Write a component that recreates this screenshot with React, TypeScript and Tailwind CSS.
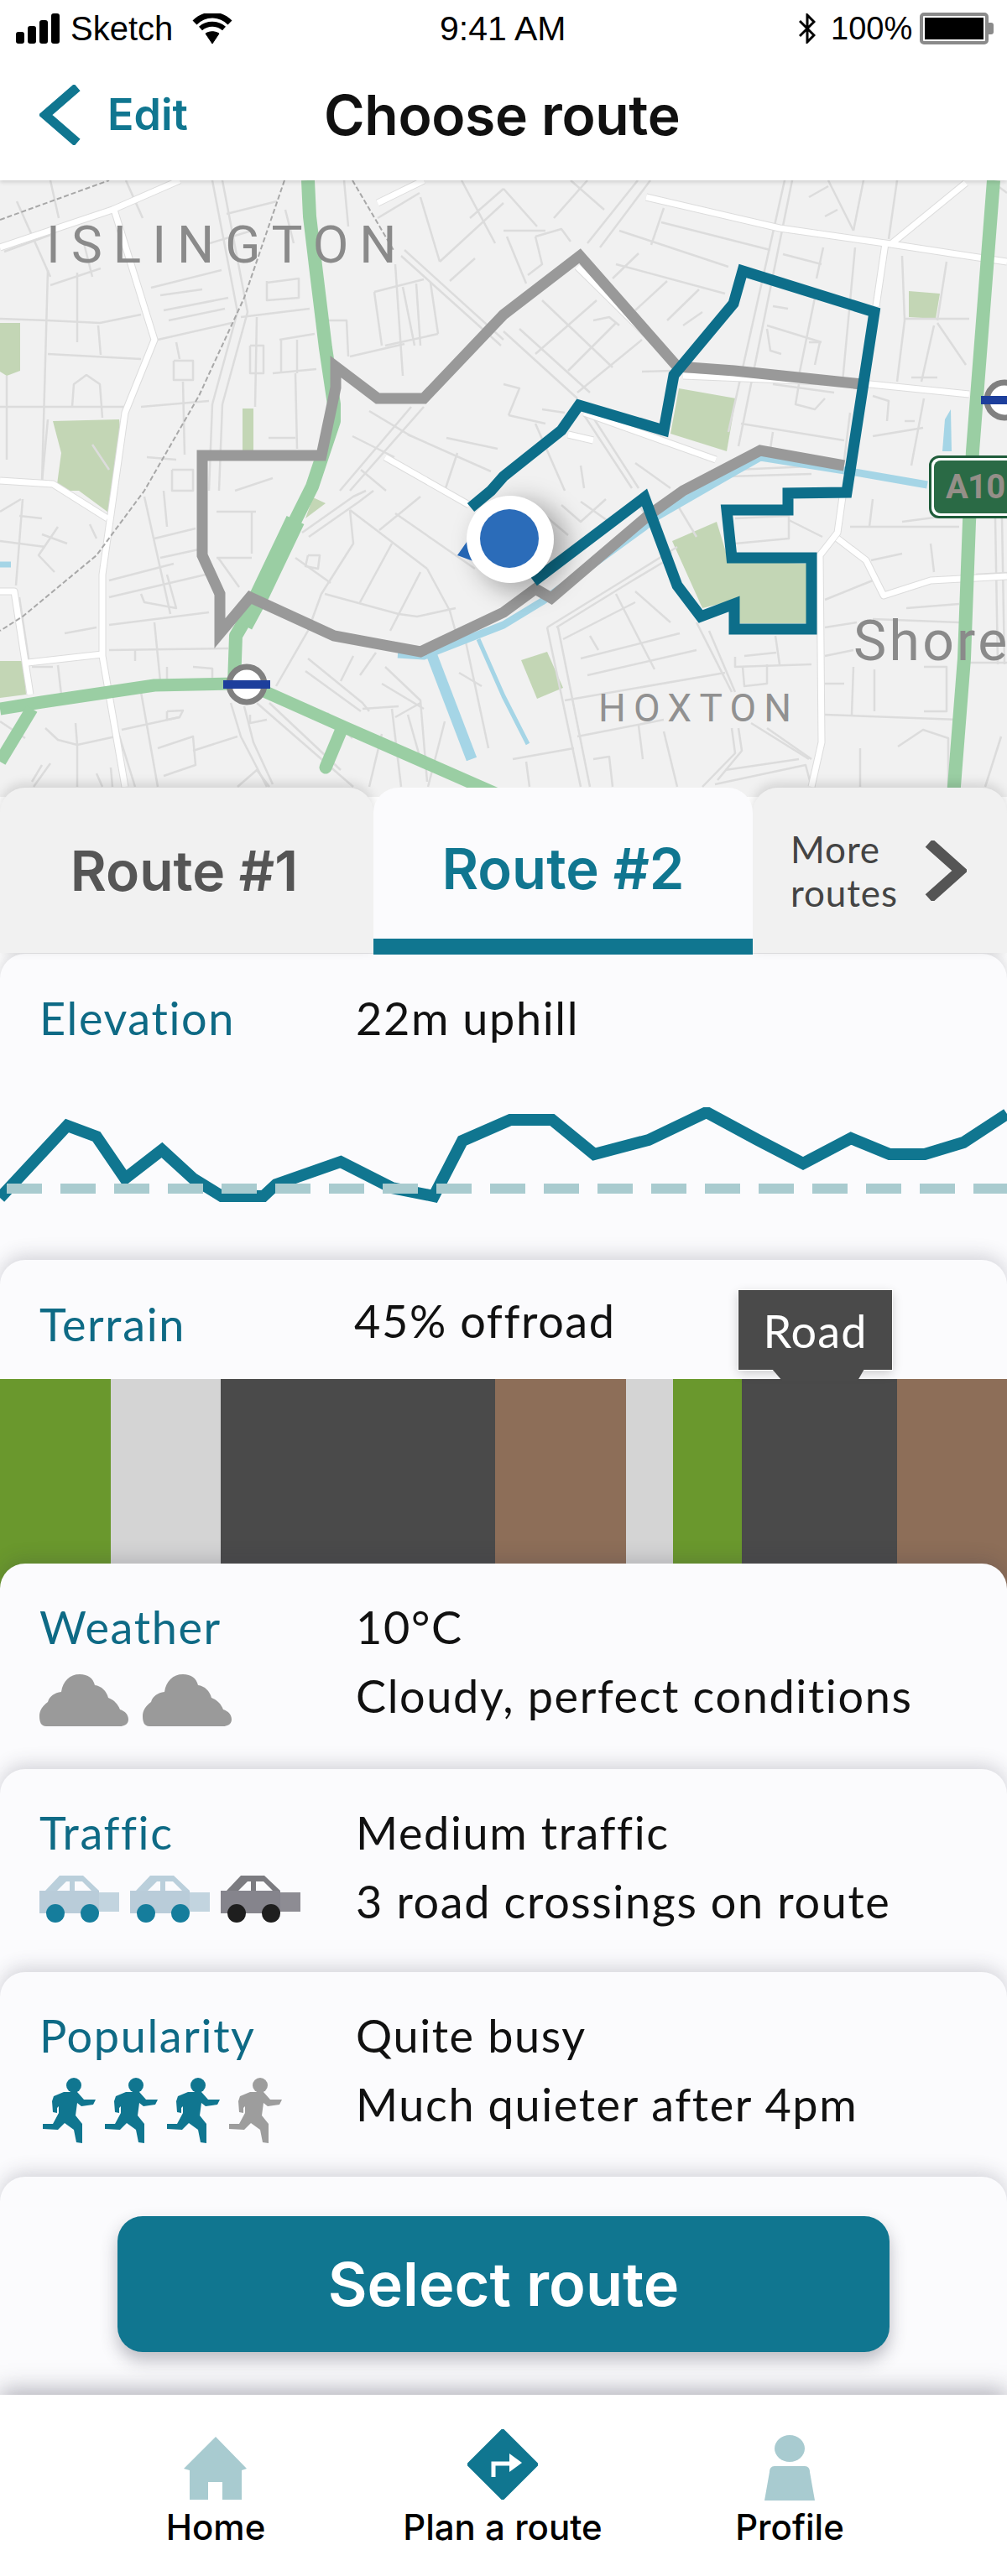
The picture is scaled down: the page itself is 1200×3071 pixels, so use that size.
const streets: string[] = [
  // top left
  '0,380 57,382 119,385 168,375', '57,322 50,575', '92,325 92,408', '117,388 120,423', '57,422 168,428',
  '0,485 149,485', '86,485 88,458 103,447 119,458 122,498', '8,448 8,548', '180,343 264,322', '195,370 272,355',
  '201,382 268,368', '191,352 241,345', '188,405 276,385', '210,408 214,428', '207,430 230,430 230,453 207,453 207,430',
  '218,455 220,542', '168,485 249,478', '298,412 314,412 314,445 298,445 298,412', '306,378 304,485', '287,378 369,368',
  '318,335 318,358 356,355 356,332 318,337', '333,405 375,398', '335,405 335,445', '354,405 354,445', '325,445 377,440',
  '352,445 354,535', '320,522 352,522', '390,382 413,382 415,425', '417,425 482,410', '446,348 505,333', '446,348 455,412',
  '480,342 494,412', '496,338 501,412', '513,337 522,398', '522,398 459,412', '471,315 480,448', '501,235 524,312',
  '524,312 600,242', '482,298 600,405', '478,305 597,412', '536,335 566,308', '505,485 417,585', '490,485 405,585',
  '486,518 585,562', '532,522 593,535', '60,215 70,260', '20,240 60,330', '150,215 170,260', '5,300 60,280', '270,255 330,240',
  '410,215 415,270', '450,260 500,230', '340,250 350,290', '250,290 300,275', '100,290 110,330', '60,340 120,320',
  '253,215 283,372 253,482 249,585', '265,215 295,372 265,482 261,585', '550,215 590,290', '560,260 600,225',
  '420,520 470,545', '440,490 490,520', '430,560 460,585', '545,540 530,585', '175,545 210,548', '205,560 230,560 230,585 205,585 205,560',
  '280,585 325,570', '110,530 130,560', '57,500 50,575',
  // top right
  '600,275 650,275', '638,282 669,273 680,288', '638,282 646,315 629,328', '604,282 627,338', '646,358 730,438',
  '600,395 688,475', '619,392 703,468', '638,422 711,358', '688,468 765,405', '677,442 734,385', '707,382 726,378 738,388',
  '765,443 803,442', '738,275 868,318', '788,265 918,298', '791,248 776,292', '730,332 761,302', '734,315 864,350',
  '757,370 795,335', '795,382 833,345', '814,388 837,372', '935,215 868,515', '944,215 880,532', '981,295 973,332',
  '933,303 979,315', '1029,215 1017,275', '1069,215 1059,285', '987,215 1017,275', '964,235 987,222', '983,258 998,250',
  '1019,295 1004,455', '971,355 952,448', '921,365 939,368', '914,388 979,408', '964,408 977,408 971,435',
  '914,392 918,418 931,422', '1078,382 1069,455', '1128,312 1117,382', '1075,305 1078,382', '1078,380 1155,380',
  '1117,385 1151,435', '1113,388 1098,455', '1086,450 1117,450', '1101,475 1086,555', '1040,472 1059,478 1057,502',
  '1078,502 1090,502', '883,505 1006,525', '921,515 918,535', '952,458 948,482 971,488 983,475', '921,458 994,468',
  '1013,492 1006,548', '600,458 619,463 606,495', '606,495 650,505', '646,488 673,492', '638,505 673,585', '696,495 753,582',
  '707,498 761,582', '692,555 696,582', '757,552 799,582', '868,568 967,565', '876,560 965,556', '1040,520 1100,510',
  '600,225 640,270', '680,215 720,250', '700,215 660,260', '760,215 700,290', '775,215 715,295', '1180,215 1200,230',
  // bottom left
  '27,595 19,698', '23,615 50,618', '0,645 54,652', '69,628 46,662 65,682', '50,637 80,648', '107,625 115,642',
  '34,785 23,712', '130,692 207,672', '130,712 245,685', '130,745 249,730', '130,775 272,773', '191,665 237,655',
  '184,642 233,630', '172,592 203,732', '195,585 199,628', '184,742 191,812', '77,755 115,748', '168,708 172,718 210,725 199,685',
  '38,795 63,795', '69,793 73,828', '161,775 161,788', '199,795 199,812', '230,795 253,797 253,812', '130,838 161,938',
  '168,825 188,938', '145,870 214,855', '199,848 218,847 214,855 199,858 199,848', '188,892 230,878 233,912 195,925',
  '230,895 283,878', '54,868 69,882 92,888 90,862', '92,888 138,878', '92,888 92,938', '38,932 50,912', '115,922 122,938',
  '132,915 134,938', '275,838 287,878 318,938', '291,842 302,885 325,935', '306,838 421,938', '321,838 406,918',
  '283,938 306,918 321,938', '298,852 298,862 318,858', '360,635 421,592 436,585', '368,640 428,598 445,585',
  '417,608 421,648 383,708 367,752 329,818', '417,608 509,678', '509,678 536,728 547,768', '387,708 475,732 497,735 543,725',
  '429,718 467,648', '465,752 501,682', '501,592 452,632', '471,612 566,678', '352,665 394,695',
  '367,662 364,675 379,678 381,662 367,662', '367,785 432,838 440,848', '364,800 430,848', '406,812 421,782', '429,805 448,778',
  '455,815 505,845', '459,795 501,835 509,932', '432,845 475,842', '467,845 478,938', '471,855 501,838', '486,852 501,905',
  '440,938 455,875', '547,802 574,818', '555,765 582,892', '300,610 300,660', '258,610 305,610', '258,665 300,665', '260,665 285,700',
  '0,610 25,595', '60,910 40,938', '0,860 30,880', '390,850 420,880', '530,860 510,938',
  // bottom right
  '638,605 677,638', '669,602 692,622 722,595', '692,598 730,625', '652,748 738,695 807,652', '663,748 749,695 799,665',
  '652,748 692,938', '665,748 703,938', '734,708 780,798', '757,705 799,742', '671,762 757,718', '692,785 810,755',
  '700,805 830,775', '703,758 713,775', '830,742 872,825', '845,752 876,825', '924,758 929,792', '876,783 876,795 967,792',
  '887,782 925,778', '914,792 914,815 887,818 885,795', '673,835 864,802', '688,878 791,858', '761,865 766,905',
  '791,872 807,938', '611,905 684,892', '707,905 726,902 730,938', '627,908 631,938', '872,868 876,898 837,938',
  '880,868 884,895 855,930', '852,935 960,912 967,938', '864,918 952,905', '895,862 964,905', '914,868 967,905',
  '983,715 1040,692', '983,748 1021,742', '983,782 1017,775', '983,815 1006,815', '983,852 1143,858', '1017,795 1015,852',
  '1042,798 1042,848', '1101,795 1128,795 1128,848 1101,848', '1025,892 1025,938', '1040,595 1036,628', '1013,628 1143,628',
  '1075,622 1143,613', '1038,668 1075,660', '1109,648 1113,682', '1163,685 1200,683', '1186,618 1189,792', '1194,618 1197,792',
  '876,618 940,615 940,642 876,648', '940,620 980,640', '1150,790 1200,790', '1143,720 1080,725', '1040,738 1143,742', '1070,890 1100,870 1130,880 1130,938',
  '1174,938 1193,878', '760,600 800,660', '800,590 830,640',
];

const whiteRoads: string[] = [
  '0,295 134,250 214,215', '136,250 184,405 149,492 136,585 122,685 122,782 149,938', '0,573 63,577 128,618',
  '0,705 17,705 36,828', '33,790 122,780', '770,235 929,272 1055,290 1166,307 1200,312', '1055,290 1044,365',
  '1063,290 1151,218', '814,448 1027,457 1155,470', '688,318 807,435', '696,492 853,548', '677,518 707,525',
  '1005,585 998,635 977,662 979,885 967,938', '998,642 1032,668 1053,710 1109,692 1200,687', '450,242 505,215',
  '459,545 559,602',
];

const parks: string[] = [
  '0,385 24,385 24,442 8,448 0,443', '63,502 142,500 143,510 132,613 94,585 67,585 73,540',
  '289,487 302,487 302,537 289,537', '364,618 388,600 373,593', '0,788 29,788 31,828 0,832',
  '809,463 877,475 866,538 799,517', '1083,347 1120,350 1115,380 1083,378',
  '801,645 854,622 868,668 962,672 962,743 879,743 877,715 837,725', '621,787 652,777 671,820 640,833',
];

const terrain: { w: number; color: string }[] = [
  { w: 132, color: 'bg-[#6a982d]' },
  { w: 131, color: 'bg-[#d4d4d4]' },
  { w: 327, color: 'bg-[#4a4a4a]' },
  { w: 156, color: 'bg-[#8d6e58]' },
  { w: 56, color: 'bg-[#d4d4d4]' },
  { w: 82, color: 'bg-[#6a982d]' },
  { w: 185, color: 'bg-[#4a4a4a]' },
  { w: 131, color: 'bg-[#8d6e58]' },
];

function RouteMap() {
  return (
    <div className="relative h-[735px] w-full overflow-hidden bg-[#f1f1f1]">
      <svg viewBox="0 215 1200 735" className="block h-[735px] w-[1200px]" fill="none" strokeLinejoin="round">
        {parks.map((p) => <polygon key={p} points={p} fill="#c3d6b5" />)}
        {streets.map((p) => <polyline key={p} points={p} stroke="#dcdcdc" strokeWidth="2.5" />)}
        {whiteRoads.map((p) => <polyline key={p} points={p} stroke="#dcdcdc" strokeWidth="9" />)}
        {whiteRoads.map((p) => <polyline key={p} points={p} stroke="#ffffff" strokeWidth="7" />)}
        {/* railways */}
        <polyline points="0,262 130,215" stroke="#a8a8a8" strokeWidth="2" strokeDasharray="6 3" />
        <polyline points="339,215 291,355 237,472 172,585 115,662 27,735 0,752" stroke="#a8a8a8" strokeWidth="2" strokeDasharray="6 3" />
        <polyline points="420,215 470,300" stroke="#a8a8a8" strokeWidth="2" strokeDasharray="6 3" />
        {/* water */}
        <polyline points="474,780 505,782 600,745 646,717 768,628 784,615 876,562 906,545 1013,562 1105,578" stroke="#a5d5e6" strokeWidth="9" />
        <polyline points="515,782 562,905" stroke="#a5d5e6" strokeWidth="13" />
        <polyline points="570,762 600,830 629,887" stroke="#a5d5e6" strokeWidth="5" />
        <polygon points="1123,538 1126,500 1133,488 1134,538" fill="#a5d5e6" />
        <polyline points="0,673 13,673" stroke="#a5d5e6" strokeWidth="7" />
        {/* green roads */}
        <polyline points="367,215 369,258 377,325 388,415 398,482 398,502 372,580 348,628 310,708 281,758 279,815" stroke="#9acea3" strokeWidth="16" />
        <polyline points="352,620 310,708 290,745" stroke="#9acea3" strokeWidth="23" />
        <polyline points="0,845 50,837 184,817 279,815" stroke="#9acea3" strokeWidth="15" />
        <polyline points="310,822 413,868 600,950" stroke="#9acea3" strokeWidth="15" />
        <polyline points="38,845 0,908" stroke="#9acea3" strokeWidth="15" />
        <polyline points="406,872 388,915" stroke="#9acea3" strokeWidth="15" strokeLinecap="round" />
        <polyline points="1184,215 1159,538 1155,622 1149,785 1136,950" stroke="#9acea3" strokeWidth="16" />
        {/* roundels */}
        <circle cx="294" cy="816" r="21" fill="#ffffff" stroke="#808080" strokeWidth="7" />
        <rect x="266" y="811" width="56" height="10" fill="#1d3f9c" />
        <circle cx="1197" cy="477" r="21" fill="#ffffff" stroke="#808080" strokeWidth="7" />
        <rect x="1169" y="472" width="31" height="10" fill="#1d3f9c" />
        {/* routes */}
        <polyline points="1027,458 875,442 807,437 691,305 600,375 505,475 450,475 400,437 400,462 383,543 241,543 241,662 262,708 262,755 298,712 398,758 501,777 600,730 638,702 657,713 772,615 814,585 906,537 1006,555" stroke="#999999" strokeWidth="13" strokeLinejoin="miter" />
        <polyline points="561,605 585,585 600,568 669,513 690,483 791,513 803,447 874,362 885,323 1042,372 1009,587 939,588 939,608 866,608 872,665 967,665 967,750 875,750 875,720 835,735 807,698 768,593 636,693" stroke="#0d6e8a" strokeWidth="13" strokeLinejoin="miter" />
        {/* current position */}
        <defs>
          <filter id="marker-shadow" x="-50%" y="-50%" width="200%" height="200%">
            <feGaussianBlur stdDeviation="14" />
          </filter>
        </defs>
        <circle cx="622" cy="652" r="56" fill="#000000" fillOpacity="0.28" filter="url(#marker-shadow)" />
        <polygon points="545,662 566,632 580,675" fill="#2566b3" />
        <circle cx="608" cy="643" r="52" fill="#ffffff" />
        <circle cx="607" cy="642" r="35" fill="#2b6cb9" />
      </svg>

      {/* map labels */}
      <span className="absolute left-[55px] top-[46px] font-[Roboto,sans-serif] text-[62px] leading-[62px] tracking-[0.21em] text-[#8a8a8a]">ISLINGTON</span>
      <span className="absolute left-[713px] top-[606px] font-[Roboto,sans-serif] text-[46px] leading-[46px] tracking-[0.2em] text-[#919191]">HOXTON</span>
      <span className="absolute left-[1017px] top-[517px] font-[Roboto,sans-serif] text-[66px] leading-[66px] tracking-[0.05em] text-[#8a8a8a]">Shore</span>
      <div className="absolute left-[1107px] top-[328px] flex h-[75px] w-[110px] items-center rounded-[12px] border-[3px] border-[#1f5c3a] bg-white p-[3px]">
        <div className="flex h-full w-full items-center rounded-[8px] bg-[#2a6a45] pl-[14px] font-[Roboto,sans-serif] text-[40px] font-bold leading-none tracking-[-0.02em] text-[#958f88]">A10</div>
      </div>
    </div>
  );
}

function Header() {
  return (
    <div className="relative z-20 h-[215px] bg-white font-['Liberation_Sans',sans-serif] shadow-[0_2px_5px_rgba(0,0,0,0.15)]">
      <div className="flex h-[68px] items-center text-[40px] leading-none text-black">
        <div className="flex w-[524px] items-center pl-[19px]">
          <svg width="54" height="36" viewBox="0 0 54 36" fill="#000000">
            <rect x="0" y="22" width="10" height="14" rx="3" />
            <rect x="14" y="15" width="10" height="21" rx="3" />
            <rect x="28" y="8" width="10" height="28" rx="3" />
            <rect x="42" y="0" width="10" height="36" rx="3" />
          </svg>
          <span className="ml-[11px]">Sketch</span>
          <svg className="ml-[23px]" width="48" height="36" viewBox="0 0 48 36" fill="none" stroke="#000000">
            <path d="M3 11 C15 -1 33 -1 45 11" strokeWidth="7" />
            <path d="M10 18 C18 11 30 11 38 18" strokeWidth="6" />
            <path d="M16 24 L24 36 L32 24 C27 21 21 21 16 24 Z" fill="#000000" strokeWidth="1" />
          </svg>
        </div>
        <span className="w-[428px] text-[41px]">9:41 AM</span>
        <svg width="20" height="36" viewBox="0 0 20 36" fill="none" stroke="#000000" strokeWidth="3">
          <path d="M1 9 L18 26 L10 34 V2 L18 10 L1 27" />
        </svg>
        <span className="ml-[18px] text-[38px]">100%</span>
        <div className="ml-[9px] flex h-[38px] w-[82px] items-center rounded-[5px] border-[4px] border-[#8a8a8a] p-[2px]">
          <div className="h-full w-full bg-black" />
        </div>
        <div className="h-[14px] w-[6px] rounded-r-[3px] bg-[#8a8a8a]" />
      </div>
      <div className="flex h-[138px] items-center font-[Inter,sans-serif]">
        <div className="flex w-[386px] items-center pl-[47px]">
          <svg width="50" height="72" viewBox="0 0 50 72" fill="none" stroke="#107690" strokeWidth="11" strokeLinejoin="miter">
            <polyline points="45,3 7,36 45,69" />
          </svg>
          <span className="ml-[31px] text-[52px] font-semibold leading-none text-[#107690]">Edit</span>
        </div>
        <span className="text-[66px] font-semibold leading-none tracking-[-0.005em] text-[#111111]">Choose route</span>
      </div>
    </div>
  );
}

function Tabs() {
  return (
    <div className="relative z-10 -mt-[11px] flex h-[199px] font-[Inter,sans-serif]">
      <div className="flex h-[197px] w-[445px] items-center justify-center rounded-t-[30px] bg-[#f1f1f1] pr-[6px] text-[66px] font-semibold leading-none text-[#555555] shadow-[0_-4px_14px_rgba(0,0,0,0.14)]">
        Route #1
      </div>
      <div className="z-10 flex h-[199px] w-[452px] flex-col rounded-t-[30px] bg-[#fbfbfd]">
        <div className="flex flex-1 items-center justify-center pt-[12px] text-[67px] font-semibold leading-none text-[#107690]">Route #2</div>
        <div className="h-[19px] bg-[#107690]" />
      </div>
      <div className="flex h-[197px] w-[303px] items-center rounded-t-[30px] bg-[#f1f1f1] pl-[45px] font-[Lato,sans-serif] text-[#444444] shadow-[0_-4px_14px_rgba(0,0,0,0.14)]">
        <div className="w-[160px] text-[44px] leading-[52px] tracking-[0.02em]">More<br />routes</div>
        <svg width="50" height="72" viewBox="0 0 50 72" fill="none" stroke="#555555" strokeWidth="13">
          <polyline points="5,3 42,36 5,69" />
        </svg>
      </div>
    </div>
  );
}

function Panel({ height, className, children }: { height: number; className?: string; children: React.ReactNode }) {
  return (
    <div
      className={`relative -mt-[30px] rounded-t-[30px] bg-[#fbfbfd] shadow-[0_-5px_22px_rgba(50,50,70,0.2)] ${className ?? ''}`}
      style={{ height }}
    >
      {children}
    </div>
  );
}

function InfoRow({ label, line1, line2, icons, iconsClass }: { label: string; line1: string; line2: string; icons: React.ReactNode; iconsClass: string }) {
  return (
    <div className="flex pl-[47px] pt-[46px] font-[Lato,sans-serif] text-[54px] leading-[60px] tracking-[0.03em]">
      <div className="w-[377px]">
        <div className="text-[#0e6a85]">{label}</div>
        <div className={`flex ${iconsClass}`}>{icons}</div>
      </div>
      <div className="text-[#111111]">
        <div>{line1}</div>
        <div className="mt-[22px]">{line2}</div>
      </div>
    </div>
  );
}

function Cloud() {
  return (
    <svg width="106" height="62" viewBox="0 0 106 62" fill="#9a9a9a">
      <path d="M8 62 C2 62 0 57 0 50 C0 42 5 37 10 33 C12 26 18 22 26 21 C28 8 36 0 48 0 C58 0 64 5 66 13 C74 14 80 20 82 28 C90 31 94 37 96 42 C102 44 106 48 106 54 C106 60 100 62 96 62 Z" />
    </svg>
  );
}

function Car({ dark }: { dark?: boolean }) {
  const roof = dark ? '#7b7b80' : '#bacfdb';
  const body = dark ? '#85848c' : '#b9ccd9';
  const trunk = dark ? '#8d8c93' : '#c2d4df';
  const wheel = dark ? '#1e1e1e' : '#157d9c';
  return (
    <svg width="96" height="56" viewBox="0 0 96 56">
      <polygon points="7,18 24,0 52,0 71,18" fill={roof} />
      <polygon points="21,18 32,7 36,7 36,18" fill="#fbfbfd" />
      <polygon points="42,18 42,7 51,7 62,18" fill="#fbfbfd" />
      <rect x="70" y="20" width="25" height="23" fill={trunk} />
      <rect x="0" y="18" width="71" height="27" fill={body} />
      <circle cx="19" cy="45" r="11" fill={wheel} />
      <circle cx="60" cy="45" r="11" fill={wheel} />
    </svg>
  );
}

function Runner({ color }: { color: string }) {
  return (
    <svg width="64" height="78" viewBox="0 0 64 78" fill={color}>
      <circle cx="38" cy="9" r="9" />
      <polygon points="14,22 26,17 42,17 50,26 64,26 61,32 47,34 42,30 40,45 48,55 48,78 41,77 38,62 27,54 19,62 1,61 1,55 13,55 20,42 20,34 18,36 18,42 13,41 12,28" />
    </svg>
  );
}

function NavItem({ label, icon }: { label: string; icon: React.ReactNode }) {
  return (
    <div className="flex w-[342px] flex-col items-center">
      <div className="flex h-[84px] items-end">{icon}</div>
      <span className="mt-[12px] whitespace-nowrap">{label}</span>
    </div>
  );
}

export default function App() {
  return (
    <div className="h-[3071px] w-[1200px] overflow-hidden bg-white">
      <Header />
      <RouteMap />
      <Tabs />

      {/* elevation */}
      <div className="relative -mt-[1px] h-[395px] rounded-t-[30px] bg-[#fbfbfd] shadow-[0_-5px_18px_rgba(50,50,70,0.2)]">
        <div className="flex pl-[47px] pt-[47px] font-[Lato,sans-serif] text-[54px] leading-[60px] tracking-[0.03em]">
          <span className="w-[377px] text-[#0e6a85]">Elevation</span>
          <span className="text-[#111111]">22m uphill</span>
        </div>
        <svg width="1200" height="120" viewBox="0 1320 1200 120" fill="none" className="absolute left-0 top-[183px]">
          <polyline
            points="0,1428 80,1342 115,1355 149,1405 193,1371 230,1405 264,1426 314,1426 329,1412 406,1385 467,1416 517,1426 551,1360 608,1335 658,1335 708,1376 773,1359 842,1326 903,1359 957,1387 1014,1357 1060,1376 1102,1376 1148,1362 1200,1328"
            stroke="#107690"
            strokeWidth="14"
          />
          <line x1="8" y1="1417" x2="1200" y2="1417" stroke="#a9cbcf" strokeWidth="12" strokeDasharray="42 22" />
        </svg>
      </div>

      {/* terrain */}
      <Panel height={392}>
        <div className="flex pl-[47px] pt-[43px] font-[Lato,sans-serif] text-[54px] leading-[60px] tracking-[0.03em]">
          <span className="mt-[4px] w-[375px] text-[#0e6a85]">Terrain</span>
          <span className="text-[#111111]">45% offroad</span>
        </div>
        <div className="absolute left-0 top-[142px] flex h-[250px] w-full">
          {terrain.map((t, i) => <div key={i} className={t.color} style={{ width: t.w }} />)}
        </div>
        <div className="absolute left-[880px] top-[36px] flex h-[95px] w-[183px] items-center justify-center bg-[#4a4a4a] pt-[2px] font-[Lato,sans-serif] text-[54px] leading-none tracking-[0.02em] text-white outline-1 outline-white shadow-[0_4px_12px_rgba(0,0,0,0.2)]">
          Road
        </div>
        <svg width="110" height="14" viewBox="0 0 110 14" className="absolute left-[920px] top-[130px]">
          <polygon points="0,0 110,0 102,14 12,14" fill="#4a4a4a" />
        </svg>
      </Panel>

      <Panel height={275}>
        <InfoRow
          label="Weather"
          line1="10°C"
          line2="Cloudy, perfect conditions"
          iconsClass="mt-[26px] gap-[17px]"
          icons={<><Cloud /><Cloud /></>}
        />
      </Panel>

      <Panel height={272}>
        <InfoRow
          label="Traffic"
          line1="Medium traffic"
          line2="3 road crossings on route"
          iconsClass="mt-[21px] gap-[12px]"
          icons={<><Car /><Car /><Car dark /></>}
        />
      </Panel>

      <Panel height={274}>
        <InfoRow
          label="Popularity"
          line1="Quite busy"
          line2="Much quieter after 4pm"
          iconsClass="mt-[20px] ml-[3px] gap-[10px]"
          icons={<><Runner color="#107690" /><Runner color="#107690" /><Runner color="#107690" /><Runner color="#9d9d9d" /></>}
        />
      </Panel>

      {/* select route */}
      <Panel height={290}>
        <div className="px-[140px] pt-[47px]">
          <div className="flex h-[162px] items-center justify-center rounded-[30px] bg-[#107690] font-[Inter,sans-serif] text-[72px] font-semibold leading-none text-white shadow-[0_10px_20px_rgba(40,40,60,0.3)]">
            Select route
          </div>
        </div>
      </Panel>

      {/* bottom nav */}
      <div className="relative -mt-[30px] flex h-[217px] bg-white pl-[86px] pt-[41px] font-[Inter,sans-serif] text-[42px] font-medium leading-none text-black shadow-[0_-6px_26px_rgba(40,40,60,0.35)]">
        <NavItem
          label="Home"
          icon={
            <svg width="76" height="76" viewBox="0 0 76 76" fill="#a8cbd0" className="mb-[-1px]">
              <polygon points="38,0 75,38 69,40 69,75 46,75 46,54 29,54 29,75 7,75 7,40 0,38" />
            </svg>
          }
        />
        <NavItem
          label="Plan a route"
          icon={
            <svg width="84" height="84" viewBox="0 0 84 84">
              <polygon points="42,0 84,42 42,84 0,42" fill="#107690" stroke="#107690" strokeWidth="2" strokeLinejoin="round" />
              <path d="M31 57 V41 H52" fill="none" stroke="#ffffff" strokeWidth="5" />
              <polygon points="50,29 65,40 50,51" fill="#ffffff" />
            </svg>
          }
        />
        <NavItem
          label="Profile"
          icon={
            <svg width="60" height="78" viewBox="0 0 60 78" fill="#a8cbd0" className="mb-[-1px]">
              <ellipse cx="30" cy="16" rx="18" ry="16" />
              <path d="M12 37 H48 C52 37 54 40 54 44 L60 78 H0 L6 44 C6 40 8 37 12 37 Z" />
            </svg>
          }
        />
      </div>
    </div>
  );
}
